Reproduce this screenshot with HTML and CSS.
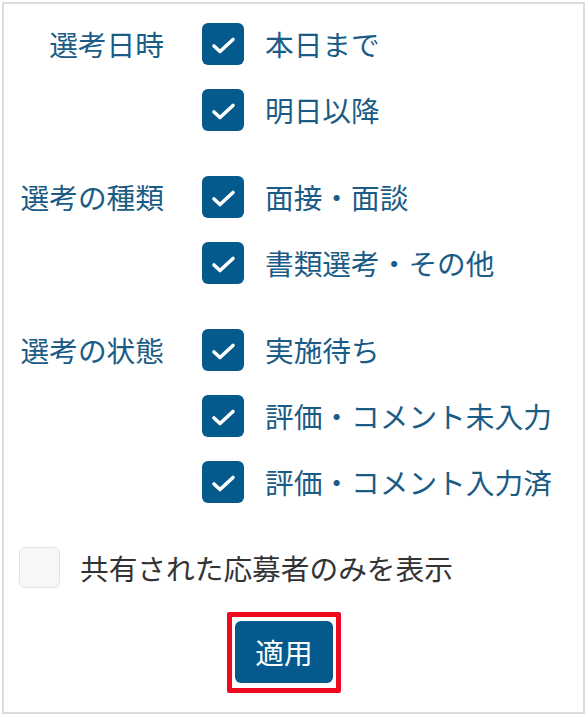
FILE: index.html
```html
<!DOCTYPE html>
<html lang="ja">
<head>
<meta charset="utf-8">
<title>絞り込み</title>
<link rel="stylesheet" href="styles.css">
</head>
<body>
<div class="panel">
  <div class="groups">
    <div class="group">
      <div class="group-label">選考日時</div>
      <div class="options">
        <label class="opt"><span class="box checked"><svg viewBox="0 0 42 42"><path d="M12 23 L18 28.5 L31 16.5"/></svg></span><span class="opt-text">本日まで</span></label>
        <label class="opt"><span class="box checked"><svg viewBox="0 0 42 42"><path d="M12 23 L18 28.5 L31 16.5"/></svg></span><span class="opt-text">明日以降</span></label>
      </div>
    </div>
    <div class="group">
      <div class="group-label">選考の種類</div>
      <div class="options">
        <label class="opt"><span class="box checked"><svg viewBox="0 0 42 42"><path d="M12 23 L18 28.5 L31 16.5"/></svg></span><span class="opt-text">面接・面談</span></label>
        <label class="opt"><span class="box checked"><svg viewBox="0 0 42 42"><path d="M12 23 L18 28.5 L31 16.5"/></svg></span><span class="opt-text">書類選考・その他</span></label>
      </div>
    </div>
    <div class="group">
      <div class="group-label">選考の状態</div>
      <div class="options">
        <label class="opt"><span class="box checked"><svg viewBox="0 0 42 42"><path d="M12 23 L18 28.5 L31 16.5"/></svg></span><span class="opt-text">実施待ち</span></label>
        <label class="opt"><span class="box checked"><svg viewBox="0 0 42 42"><path d="M12 23 L18 28.5 L31 16.5"/></svg></span><span class="opt-text">評価・コメント未入力</span></label>
        <label class="opt"><span class="box checked"><svg viewBox="0 0 42 42"><path d="M12 23 L18 28.5 L31 16.5"/></svg></span><span class="opt-text">評価・コメント入力済</span></label>
      </div>
    </div>
  </div>
  <label class="shared"><span class="box empty"></span><span class="shared-text">共有された応募者のみを表示</span></label>
  <div class="actions">
    <div class="highlight">
      <button class="apply" type="button">適用</button>
    </div>
  </div>
</div>
</body>
</html>
```
FILE: styles.css
```css
html, body {
  margin: 0;
  padding: 0;
  background: #ffffff;
}
body {
  font-family: "Noto Sans CJK JP", "Noto Sans", sans-serif;
  font-size: 28.7px;
}
.panel {
  margin: 2px 0 0 2px;
  width: 583px;
  box-sizing: border-box;
  border: 2px solid #dcdcdc;
  padding: 19px 16px 19px 16px;
}
.groups {
  display: flex;
  flex-direction: column;
  gap: 45px;
}
.group {
  display: grid;
  grid-template-columns: 144px 1fr;
  column-gap: 38px;
  align-items: start;
}
.group-label {
  text-align: right;
  color: #1b5c86;
  line-height: 42px;
  white-space: nowrap;
}
.options {
  display: flex;
  flex-direction: column;
  gap: 24px;
}
.opt {
  display: flex;
  align-items: center;
  gap: 21px;
  height: 42px;
}
.box {
  width: 42px;
  height: 42px;
  box-sizing: border-box;
  border-radius: 6px;
  flex: none;
  display: block;
}
.box.checked {
  background: #045a8d;
}
.box svg {
  display: block;
  width: 42px;
  height: 42px;
}
.box svg path {
  fill: none;
  stroke: #ffffff;
  stroke-width: 3.6;
  stroke-linecap: round;
  stroke-linejoin: round;
}
.box.empty {
  width: 41px;
  height: 41px;
  background: #f7f7f7;
  border: 1px solid #e4e4e4;
}
.opt-text {
  color: #1b5c86;
  line-height: 42px;
  white-space: nowrap;
}
.shared {
  display: flex;
  align-items: center;
  gap: 20px;
  margin-top: 44px;
  margin-left: -1px;
}
.shared-text {
  color: #333333;
  line-height: 41px;
  white-space: nowrap;
}
.actions {
  display: flex;
  justify-content: center;
  padding-right: 19px;
  margin-top: 24px;
}
.highlight {
  border: 5px solid #ee0a1e;
  border-radius: 2px;
  padding: 4px 3px 5px 3px;
  background: #ffffff;
}
.apply {
  display: block;
  width: 98px;
  height: 62px;
  border: none;
  border-radius: 6px;
  background: #045a8d;
  color: #ffffff;
  font-family: "Noto Sans CJK JP", "Noto Sans", sans-serif;
  font-size: 28.7px;
  line-height: 62px;
  padding: 0;
}
```
